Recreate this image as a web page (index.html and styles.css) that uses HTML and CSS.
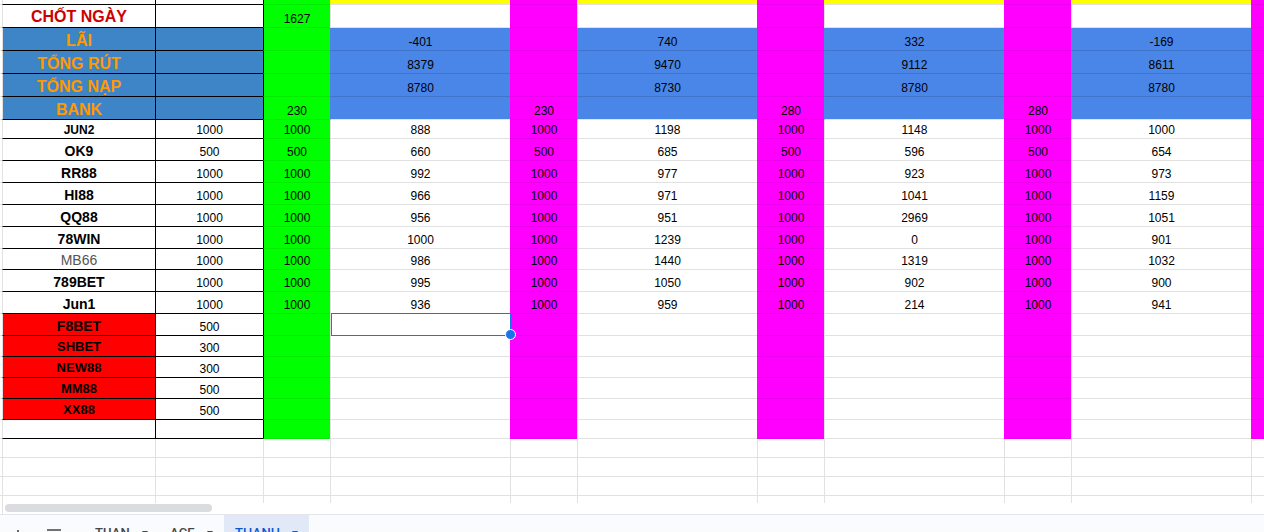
FILE: index.html
```html
<!DOCTYPE html>
<html lang="vi">
<head>
  <meta charset="UTF-8">
  <title>THANH - Bảng theo dõi</title>
  <link rel="stylesheet" href="styles.css">
</head>
<body>
  <div class="sheet">
    <table class="grid">
      <colgroup>
        <col class="c-gut"><col class="c-name"><col class="c-von"><col class="c-narrow">
        <col class="c-wide"><col class="c-narrow"><col class="c-wide"><col class="c-narrow">
        <col class="c-wide"><col class="c-narrow"><col class="c-wide"><col class="c-narrow">
      </colgroup>
      <tbody>
        <tr class="h5">
          <td class="gut"></td><td class="bx"></td><td class="bx bxl"></td><td class="g bxl"></td>
          <td class="y"></td><td class="m"></td><td class="y"></td><td class="m"></td>
          <td class="y"></td><td class="m"></td><td class="y"></td><td class="m"></td>
        </tr>
        <tr class="h23">
          <td class="gut"></td><td class="bx title">CHỐT NGÀY</td><td class="bx bxl"></td><td class="g bxl">1627</td>
          <td></td><td class="m"></td><td></td><td class="m"></td>
          <td></td><td class="m"></td><td></td><td class="m"></td>
        </tr>
        <tr class="h23">
          <td class="gut"></td><td class="bx hd">LÃI</td><td class="bx bxl hb"></td><td class="g bxl"></td>
          <td class="b">-401</td><td class="m"></td><td class="b">740</td><td class="m"></td>
          <td class="b">332</td><td class="m"></td><td class="b">-169</td><td class="m"></td>
        </tr>
        <tr class="h23">
          <td class="gut"></td><td class="bx hd">TỔNG RÚT</td><td class="bx bxl hb"></td><td class="g bxl"></td>
          <td class="b">8379</td><td class="m"></td><td class="b">9470</td><td class="m"></td>
          <td class="b">9112</td><td class="m"></td><td class="b">8611</td><td class="m"></td>
        </tr>
        <tr class="h23">
          <td class="gut"></td><td class="bx hd">TỔNG NẠP</td><td class="bx bxl hb"></td><td class="g bxl"></td>
          <td class="b">8780</td><td class="m"></td><td class="b">8730</td><td class="m"></td>
          <td class="b">8780</td><td class="m"></td><td class="b">8780</td><td class="m"></td>
        </tr>
        <tr class="h23 last-blue">
          <td class="gut"></td><td class="bx hd">BANK</td><td class="bx bxl hb"></td><td class="g bxl">230</td>
          <td class="b"></td><td class="m">230</td><td class="b"></td><td class="m">280</td>
          <td class="b"></td><td class="m">280</td><td class="b"></td><td class="m"></td>
        </tr>
        <tr class="h19">
          <td class="gut"></td><td class="bx nm sm">JUN2</td><td class="bx bxl">1000</td><td class="g bxl">1000</td>
          <td>888</td><td class="m">1000</td><td>1198</td><td class="m">1000</td>
          <td>1148</td><td class="m">1000</td><td>1000</td><td class="m"></td>
        </tr>
        <tr class="h22">
          <td class="gut"></td><td class="bx nm">OK9</td><td class="bx bxl">500</td><td class="g bxl">500</td>
          <td>660</td><td class="m">500</td><td>685</td><td class="m">500</td>
          <td>596</td><td class="m">500</td><td>654</td><td class="m"></td>
        </tr>
        <tr class="h22">
          <td class="gut"></td><td class="bx nm">RR88</td><td class="bx bxl">1000</td><td class="g bxl">1000</td>
          <td>992</td><td class="m">1000</td><td>977</td><td class="m">1000</td>
          <td>923</td><td class="m">1000</td><td>973</td><td class="m"></td>
        </tr>
        <tr class="h22">
          <td class="gut"></td><td class="bx nm">HI88</td><td class="bx bxl">1000</td><td class="g bxl">1000</td>
          <td>966</td><td class="m">1000</td><td>971</td><td class="m">1000</td>
          <td>1041</td><td class="m">1000</td><td>1159</td><td class="m"></td>
        </tr>
        <tr class="h22">
          <td class="gut"></td><td class="bx nm">QQ88</td><td class="bx bxl">1000</td><td class="g bxl">1000</td>
          <td>956</td><td class="m">1000</td><td>951</td><td class="m">1000</td>
          <td>2969</td><td class="m">1000</td><td>1051</td><td class="m"></td>
        </tr>
        <tr class="h22">
          <td class="gut"></td><td class="bx nm">78WIN</td><td class="bx bxl">1000</td><td class="g bxl">1000</td>
          <td>1000</td><td class="m">1000</td><td>1239</td><td class="m">1000</td>
          <td>0</td><td class="m">1000</td><td>901</td><td class="m"></td>
        </tr>
        <tr class="h21">
          <td class="gut"></td><td class="bx nm thin">MB66</td><td class="bx bxl">1000</td><td class="g bxl">1000</td>
          <td>986</td><td class="m">1000</td><td>1440</td><td class="m">1000</td>
          <td>1319</td><td class="m">1000</td><td>1032</td><td class="m"></td>
        </tr>
        <tr class="h22">
          <td class="gut"></td><td class="bx nm">789BET</td><td class="bx bxl">1000</td><td class="g bxl">1000</td>
          <td>995</td><td class="m">1000</td><td>1050</td><td class="m">1000</td>
          <td>902</td><td class="m">1000</td><td>900</td><td class="m"></td>
        </tr>
        <tr class="h22">
          <td class="gut"></td><td class="bx nm">Jun1</td><td class="bx bxl">1000</td><td class="g bxl">1000</td>
          <td>936</td><td class="m">1000</td><td>959</td><td class="m">1000</td>
          <td>214</td><td class="m">1000</td><td>941</td><td class="m"></td>
        </tr>
        <tr class="h22">
          <td class="gut"></td><td class="bx red nm">F8BET</td><td class="bx bxl">500</td><td class="g bxl"></td>
          <td class="sel"></td><td class="m"></td><td></td><td class="m"></td>
          <td></td><td class="m"></td><td></td><td class="m"></td>
        </tr>
        <tr class="h21">
          <td class="gut"></td><td class="bx red nm sm2">SHBET</td><td class="bx bxl">300</td><td class="g bxl"></td>
          <td></td><td class="m"></td><td></td><td class="m"></td>
          <td></td><td class="m"></td><td></td><td class="m"></td>
        </tr>
        <tr class="h21">
          <td class="gut"></td><td class="bx red nm sm2">NEW88</td><td class="bx bxl">300</td><td class="g bxl"></td>
          <td></td><td class="m"></td><td></td><td class="m"></td>
          <td></td><td class="m"></td><td></td><td class="m"></td>
        </tr>
        <tr class="h21">
          <td class="gut"></td><td class="bx red nm sm2">MM88</td><td class="bx bxl">500</td><td class="g bxl"></td>
          <td></td><td class="m"></td><td></td><td class="m"></td>
          <td></td><td class="m"></td><td></td><td class="m"></td>
        </tr>
        <tr class="h21">
          <td class="gut"></td><td class="bx red nm sm2">XX88</td><td class="bx bxl">500</td><td class="g bxl"></td>
          <td></td><td class="m"></td><td></td><td class="m"></td>
          <td></td><td class="m"></td><td></td><td class="m"></td>
        </tr>
        <tr class="h19">
          <td class="gut"></td><td class="bx"></td><td class="bx bxl"></td><td class="g bxl"></td>
          <td></td><td class="m"></td><td></td><td class="m"></td>
          <td></td><td class="m"></td><td></td><td class="m"></td>
        </tr>
        <tr class="h19">
          <td class="gut"></td><td></td><td></td><td></td><td></td><td></td>
          <td></td><td></td><td></td><td></td><td></td><td></td>
        </tr>
        <tr class="h19">
          <td class="gut"></td><td></td><td></td><td></td><td></td><td></td>
          <td></td><td></td><td></td><td></td><td></td><td></td>
        </tr>
        <tr class="h19">
          <td class="gut"></td><td></td><td></td><td></td><td></td><td></td>
          <td></td><td></td><td></td><td></td><td></td><td></td>
        </tr>
        <tr class="h19">
          <td class="gut"></td><td></td><td></td><td></td><td></td><td></td>
          <td></td><td></td><td></td><td></td><td></td><td></td>
        </tr>
      </tbody>
    </table>
  </div>

  <div class="hscroll"><div class="thumb"></div></div>

  <div class="tabs">
    <span class="tb-btn add">
      <svg width="12" height="12" viewBox="0 0 12 12"><path d="M6 1v10M1 6h10" stroke="#444746" stroke-width="1.6" fill="none"/></svg>
    </span>
    <span class="tb-btn menu">
      <svg width="14" height="12" viewBox="0 0 14 12"><path d="M0 1h14M0 5h14M0 9h14" stroke="#444746" stroke-width="1.6" fill="none"/></svg>
    </span>
    <span class="tab first">TUAN<i class="caret"></i></span>
    <span class="tab">ACE<i class="caret"></i></span>
    <span class="tab active">THANH<i class="caret"></i></span>
  </div>
</body>
</html>
```

FILE: styles.css
```css
* { box-sizing: border-box; }
body { margin: 0; height: 532px; overflow: hidden; background: #fff; font-family: "Liberation Sans", Arial, sans-serif; }

/* grid */
.sheet { height: 503px; overflow: hidden; }
.grid { border-collapse: separate; border-spacing: 0; table-layout: fixed; width: 1318px; }
.c-gut { width: 2px; }
.c-name { width: 153px; }
.c-von { width: 108px; }
.c-narrow { width: 67px; }
.c-wide { width: 180px; }

.grid td { padding: 0 2px; border-left: 1px solid #e1e1e1; border-bottom: 1px solid #e1e1e1; font-size: 12px; line-height: 15px; text-align: center; vertical-align: bottom; white-space: nowrap; overflow: hidden; color: #000; }
.grid td.gut { border-left: 0; padding: 0; }

.h5 { height: 5px; }
.h5 td { line-height: 0; }
.h19 { height: 19px; }
.h21 { height: 21px; }
.h22 { height: 22px; }
.h23 { height: 23px; }

/* fills */
.grid .g { background: #00ff00; border-left-color: #00ff00; border-bottom-color: rgba(0,0,0,0.07); }
.grid .m { background: #ff00ff; border-left-color: #ff00ff; border-bottom-color: rgba(0,0,0,0.07); }
.grid .y { background: #ffff00; border-left-color: #ffff00; }
.grid .b { background: #4a86e8; border-left-color: #4a86e8; border-bottom-color: rgba(0,0,0,0.13); }
.last-blue .b { border-bottom-color: #dfe6f2; }
.grid .hb { background: #3d85c6; }
.grid .red { background: #ff0000; }

/* black box round the name columns */
.grid .bx { border-bottom-color: #000; }
.grid .bxl { border-left-color: #000; }

/* labels */
.grid .title { color: #cc0000; font-size: 16px; font-weight: bold; line-height: 18px; vertical-align: middle; padding-top: 2px; }
.grid .hd { background: #3d85c6; color: #ff9900; font-size: 16px; font-weight: bold; line-height: 18px; vertical-align: middle; padding-top: 3px; }
.grid .nm { font-size: 14px; font-weight: bold; line-height: 16px; padding-bottom: 1px; }
.grid .nm.sm { font-size: 12px; line-height: 15px; padding-bottom: 0; }
.grid .nm.sm2 { font-size: 13px; }
.grid .nm.thin { font-weight: normal; color: #555; }

/* active cell */
.grid .sel { position: relative; overflow: visible; }
.sel::before { content: ""; position: absolute; top: -1px; left: 0; right: -1px; bottom: -1px; border: 1px solid #1a73e8; }
.sel::after { content: ""; position: absolute; right: -6px; bottom: -5px; width: 9px; height: 9px; border-radius: 50%; background: #1a73e8; border: 1px solid #fff; }

/* horizontal scrollbar */
.hscroll { height: 11px; margin-left: 2px; border-left: 1px solid #e1e1e1; padding: 1px 0 0 2px; }
.thumb { width: 207px; height: 8px; border-radius: 4px; background: #dadce0; }

/* sheet tabs */
.tabs { height: 36px; border-top: 1px solid #e3e6ea; background: #f9fbfd; display: flex; padding-left: 12px; font-family: Roboto, "Liberation Sans", sans-serif; font-size: 13px; font-weight: 500; color: #444746; }
.tb-btn { display: flex; align-items: center; padding-top: 4px; }
.tb-btn.menu { margin-left: 23px; }
.tab { display: flex; align-items: center; padding: 0 11px; letter-spacing: 0.2px; }
.tab.first { margin-left: 23px; }
.tab.active { background: #e1e9f7; color: #0b57d0; }
.caret { width: 0; height: 0; margin-left: 12px; border-left: 3px solid transparent; border-right: 3px solid transparent; border-top: 4px solid currentColor; }
```
